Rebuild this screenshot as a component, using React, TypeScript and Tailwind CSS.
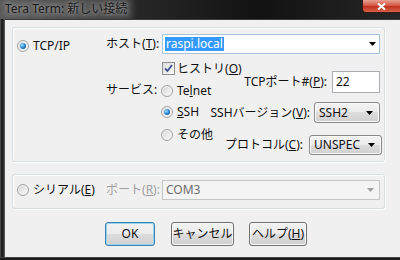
import React from 'react';

const Radio: React.FC<{ checked?: boolean }> = ({ checked }) => (
  <span className="flex h-[12px] w-[12px] shrink-0 items-center justify-center rounded-full border border-[#a2a2a2] bg-[linear-gradient(135deg,#d4d4d4,#fdfdfd)] shadow-[inset_0_0_0_1px_#f4f4f4]">
    {checked && (
      <span className="h-[6px] w-[6px] rounded-full bg-[radial-gradient(circle_at_35%_35%,#a8e4ff,#1f7bc8_55%,#0c3d70)]" />
    )}
  </span>
);

const Arrow: React.FC<{ gray?: boolean }> = ({ gray }) => (
  <svg width="7" height="4" viewBox="0 0 7 4" className="shrink-0">
    <path d="M0 0H7L3.5 4Z" fill={gray ? '#a0a0a0' : '#000'} />
  </svg>
);

const Key: React.FC<{ k: string }> = ({ k }) => (
  <span>
    (<u className="underline-offset-1">{k}</u>)
  </span>
);

const Dropdown: React.FC<{ value: string; width: string }> = ({ value, width }) => (
  <div
    className={`flex h-full ${width} items-center justify-between rounded-[3px] border border-[#8a8a8a] bg-[linear-gradient(#f3f3f3,#ebebeb_50%,#dddddd_50%,#d0d0d0)] pl-[4px] pr-[6px] shadow-[inset_0_0_0_1px_#fafafa]`}
  >
    <span>{value}</span>
    <Arrow />
  </div>
);

const Button: React.FC<{ children: React.ReactNode; width: string; primary?: boolean }> = ({
  children,
  width,
  primary,
}) => (
  <button
    className={`flex h-full ${width} items-center justify-center rounded-[3px] border bg-[linear-gradient(#f2f2f2,#ebebeb_50%,#dddddd_50%,#cfcfcf)] ${
      primary
        ? 'border-[#3c7fb1] shadow-[inset_0_0_0_1px_#98d4f2]'
        : 'border-[#707070] shadow-[inset_0_0_0_1px_#f8f8f8]'
    }`}
  >
    {children}
  </button>
);

export default function App() {
  return (
    <div
      className="flex h-[260px] w-[400px] flex-col overflow-hidden bg-[#1c1c1c] text-[12px] leading-[14px] text-[#111]"
      style={{ fontFamily: '"Noto Sans", "Noto Sans CJK JP", sans-serif' }}
    >
      {/* title bar */}
      <div className="flex h-[19px] shrink-0 items-start justify-between bg-[linear-gradient(90deg,#505050,#2a2a2a_30%,#121212_65%,#262626)]">
        <span className="mt-[2px] ml-[4px] bg-[#777]/50 px-[1px] text-[#1a1a1a] shadow-[0_0_6px_4px_rgba(120,120,120,0.5)] [text-shadow:0_0_4px_#bdbdbd]">
          Tera Term: 新しい接続
        </span>
        <div className="flex h-[13px] w-[38px] items-center justify-center rounded-bl-[4px] border-b border-l border-[#3a1a14] bg-[linear-gradient(#e9a193,#d45a46_45%,#c0321f_55%,#d9624a)]">
          <svg width="9" height="7" viewBox="0 0 9 7">
            <path d="M1 0.5L8 6.5M8 0.5L1 6.5" stroke="#fff" strokeWidth="2" />
          </svg>
        </div>
      </div>

      <div className="flex flex-1">
        <div className="w-[5px] shrink-0 bg-[linear-gradient(90deg,#5a5a5a,#232323_30%,#1a1a1a_60%,#6a6a6a)]" />

        {/* client */}
        <div className="flex flex-1 flex-col border-t border-[#3a3a3a] bg-[#f0f0f0] pt-[7px] pl-[7px]">
          {/* TCP/IP group */}
          <div className="flex h-[135px] w-[373px] rounded-[3px] border border-[#d5dfe5] shadow-[inset_1px_1px_0_#fff,1px_1px_0_#fff]">
            <div className="w-[93px] shrink-0 pt-[11px] pl-[4px]">
              <div className="flex h-[14px] items-center gap-[4px]">
                <Radio checked />
                <span>TCP/IP</span>
              </div>
            </div>

            <div className="flex w-[56px] shrink-0 flex-col pt-[6px]">
              <div className="flex h-[20px] items-center whitespace-nowrap">
                ホスト<Key k="T" />:
              </div>
              <div className="mt-[29px] flex h-[14px] items-center whitespace-nowrap">サービス:</div>
            </div>

            <div className="flex w-[218px] shrink-0 flex-col pt-[6px]">
              <div className="flex h-[20px] items-center justify-between border border-[#a9c3de] bg-white pr-[3px] pl-[2px]">
                <span className="bg-[#3399ff] px-[1px] text-white">raspi.local</span>
                <Arrow />
              </div>

              <div className="flex">
                <div className="flex w-[48px] shrink-0 flex-col whitespace-nowrap">
                  <div className="mt-[8px] flex h-[13px] items-center gap-[2px]">
                    <span className="flex h-[13px] w-[13px] shrink-0 items-center justify-center border border-[#8e8f8f] bg-[linear-gradient(135deg,#dcdcdc,#fbfbfb)]">
                      <svg width="9" height="9" viewBox="0 0 9 9">
                        <path d="M1 4.5L3.5 7L8 1" stroke="#3c4f8f" strokeWidth="1.8" fill="none" />
                      </svg>
                    </span>
                    <span>
                      ヒストリ<Key k="O" />
                    </span>
                  </div>
                  <div className="mt-[8px] flex h-[15px] items-center gap-[4px] -ml-[1px]">
                    <Radio />
                    <span>
                      Te<u>l</u>net
                    </span>
                  </div>
                  <div className="mt-[6px] flex h-[15px] items-center gap-[4px] -ml-[1px]">
                    <Radio checked />
                    <span>
                      <u>S</u>SH
                    </span>
                  </div>
                  <div className="mt-[8px] flex h-[15px] items-center gap-[4px] -ml-[1px]">
                    <Radio />
                    <span>その他</span>
                  </div>
                </div>

                <div className="flex w-[170px] shrink-0 flex-col whitespace-nowrap">
                  <div className="mt-[17px] flex h-[22px] items-center justify-end gap-[5px]">
                    <span>
                      TCPポート#<Key k="P" />:
                    </span>
                    <div className="flex h-full w-[48px] items-center border border-[#abadb3] bg-white pl-[3px]">
                      22
                    </div>
                  </div>
                  <div className="mt-[9px] flex h-[21px] items-center justify-end gap-[4px]">
                    <span>
                      SSHバージョン<Key k="V" />:
                    </span>
                    <Dropdown value="SSH2" width="w-[66px]" />
                  </div>
                  <div className="mt-[12px] -mr-[2px] flex h-[20px] items-center justify-end gap-[6px]">
                    <span>
                      プロトコル<Key k="C" />:
                    </span>
                    <Dropdown value="UNSPEC" width="w-[73px]" />
                  </div>
                </div>
              </div>
            </div>
          </div>

          {/* serial group */}
          <div className="mt-[12px] flex h-[35px] w-[373px] items-start rounded-[3px] border border-[#d5dfe5] pt-[5px] shadow-[inset_1px_1px_0_#fff,1px_1px_0_#fff]">
            <div className="flex h-[20px] w-[93px] shrink-0 items-center gap-[4px] pl-[4px]">
              <Radio />
              <span>
                シリアル<Key k="E" />
              </span>
            </div>
            <div className="flex h-[20px] w-[56px] shrink-0 items-center whitespace-nowrap text-[#a0a0a0]">
              ポート<Key k="R" />:
            </div>
            <div className="flex h-[20px] w-[218px] shrink-0 items-center justify-between border border-[#c6c6c6] bg-[#f4f4f4] pr-[5px] pl-[3px] text-[#6d6d6d]">
              <span>COM3</span>
              <Arrow gray />
            </div>
          </div>

          {/* buttons */}
          <div className="mt-[13px] flex h-[24px] pl-[93px]">
            <Button width="w-[50px]" primary>
              OK
            </Button>
            <div className="w-[16px]" />
            <Button width="w-[63px]">キャンセル</Button>
            <div className="w-[15px]" />
            <Button width="w-[58px]">
              ヘルプ<Key k="H" />
            </Button>
          </div>
        </div>
      </div>

      <div className="h-[3px] shrink-0 border-t border-[#444] bg-[#1c1c1c]" />
    </div>
  );
}
